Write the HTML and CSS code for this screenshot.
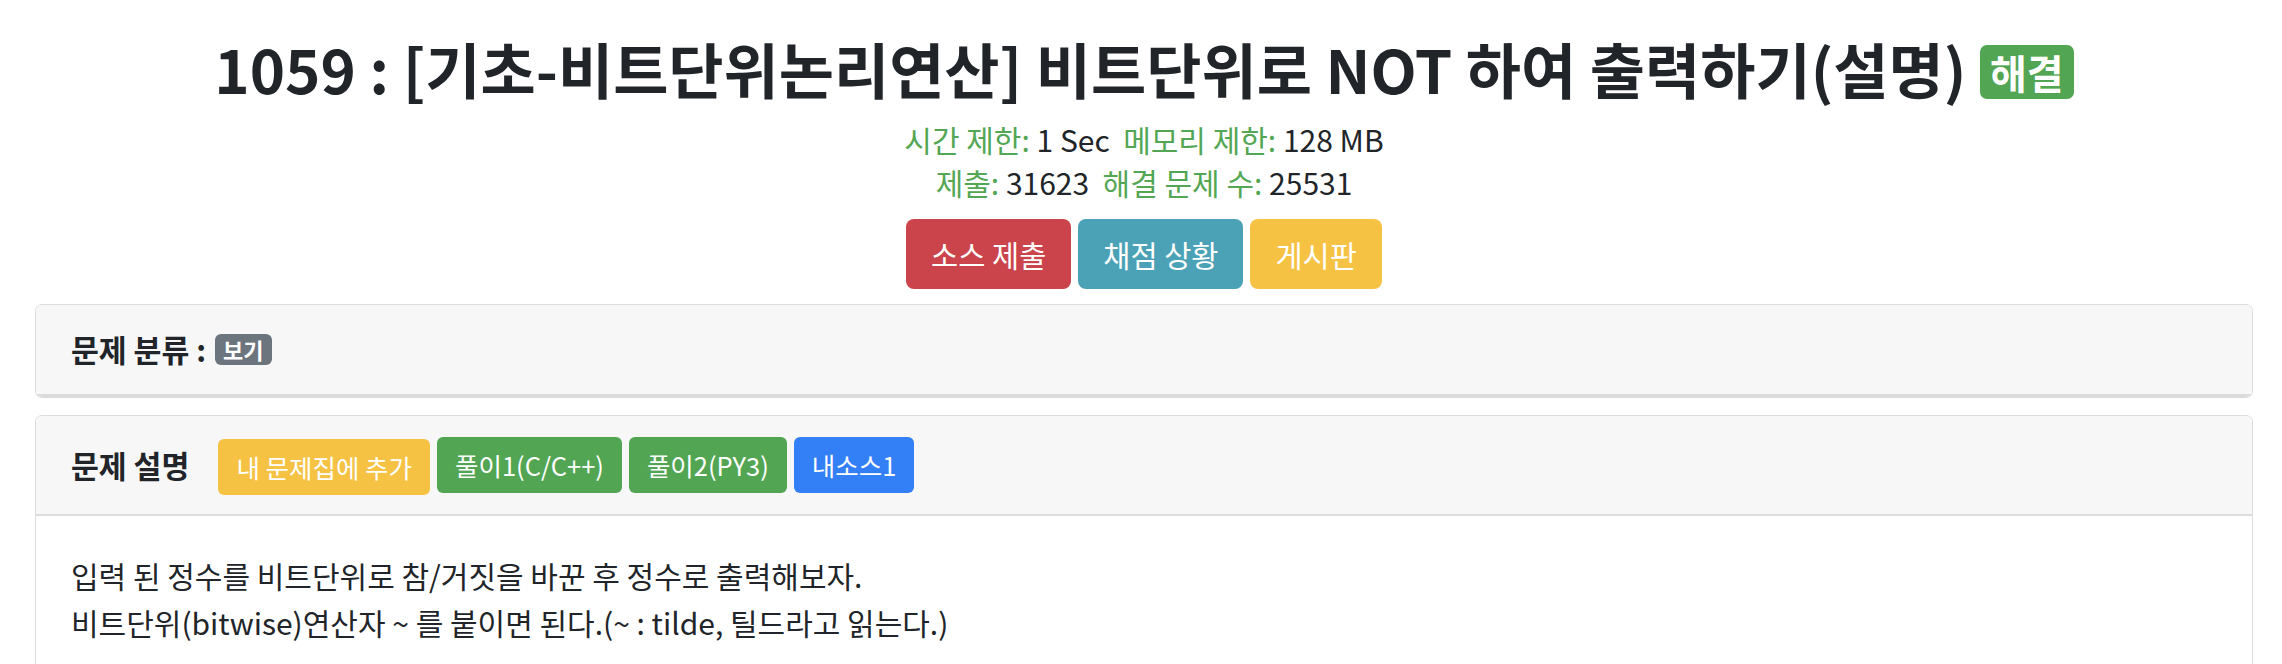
FILE: index.html
```html
<!DOCTYPE html>
<html lang="en">
<head>
<meta charset="utf-8">
<title>1059 : [기초-비트단위논리연산] 비트단위로 NOT 하여 출력하기(설명)</title>
<link rel="stylesheet" href="styles.css">
</head>
<body>
<div class="page">
  <div class="problem-head">
    <h1 class="title">1059 : [기초-비트단위논리연산] 비트단위로 NOT 하여 출력하기(설명) <span class="badge badge-success">해결</span></h1>
    <div class="meta">
      <div><span class="label">시간 제한:</span> 1 Sec&nbsp; <span class="label">메모리 제한:</span> 128 MB</div>
      <div><span class="label">제출:</span> 31623&nbsp; <span class="label">해결 문제 수:</span> 25531</div>
    </div>
    <div class="actions">
      <a class="btn btn-lg btn-danger">소스 제출</a>
      <a class="btn btn-lg btn-info">채점 상황</a>
      <a class="btn btn-lg btn-warning">게시판</a>
    </div>
  </div>

  <div class="card card-collapsed">
    <div class="card-header">
      <span class="head-label">문제 분류 :</span>
      <span class="badge badge-secondary">보기</span>
    </div>
  </div>

  <div class="card">
    <div class="card-header">
      <span class="head-label head-gap">문제 설명</span>
      <a class="btn btn-sm btn-warning btn-low">내 문제집에 추가</a>
      <a class="btn btn-sm btn-success">풀이1(C/C++)</a>
      <a class="btn btn-sm btn-success">풀이2(PY3)</a>
      <a class="btn btn-sm btn-primary">내소스1</a>
    </div>
    <div class="card-body">
      <p>입력 된 정수를 비트단위로 참/거짓을 바꾼 후 정수로 출력해보자.<br>비트단위(bitwise)연산자 ~ 를 붙이면 된다.(~ : tilde, 틸드라고 읽는다.)</p>
    </div>
  </div>
</div>
</body>
</html>
```

FILE: styles.css
```css
* { box-sizing: border-box; }

body {
  margin: 0;
  background: #ffffff;
  color: #212529;
  font-family: "Noto Sans CJK KR", "Noto Sans", sans-serif;
}

.page {
  padding: 32px 29px 0 35px;
}

.problem-head {
  text-align: center;
}

.title {
  margin: 0 0 14px;
  font-size: 60px;
  line-height: 72px;
  font-weight: 700;
  color: #212529;
}

.title .badge {
  font-size: 40px;
  line-height: 54px;
  padding: 0 10px;
  border-radius: 7px;
  vertical-align: 5px;
}

.badge {
  display: inline-block;
  color: #ffffff;
  font-weight: 700;
}

.badge-success { background: #52a552; }
.badge-secondary { background: #6c757d; }

.meta {
  font-size: 30px;
  line-height: 43px;
  color: #212529;
}

.meta .label { color: #53a653; }

.actions {
  margin-top: 15px;
  display: flex;
  justify-content: center;
  gap: 7px;
}

.btn {
  display: inline-block;
  color: #ffffff;
  text-decoration: none;
  white-space: nowrap;
}

.btn-lg {
  font-size: 29.5px;
  line-height: 42px;
  padding: 14px 25px;
  border-radius: 8px;
}

.btn-sm {
  font-size: 25.5px;
  line-height: 36px;
  padding: 10px 18px;
  border-radius: 6px;
}

.btn-danger { background: #cb444b; }
.btn-info { background: #4ba1b6; }
.btn-warning { background: #f5c243; }
.btn-success { background: #52a552; }
.btn-primary { background: #337ff6; }

.btn-low { margin-top: 2px; margin-bottom: -2px; }

.card {
  margin-top: 15px;
  border: 1px solid #dcdcdc;
  border-radius: 7px;
  overflow: hidden;
  background: #ffffff;
}

.card + .card { margin-top: 17px; }

.card-header {
  display: flex;
  align-items: center;
  gap: 7px;
  background: #f7f7f7;
  border-bottom: 2px solid #dcdcdc;
  padding: 21px 35px;
}

.card-collapsed .card-header {
  padding: 24px 35px 25px;
  border-bottom-width: 3px;
}

.head-label {
  font-size: 30.3px;
  line-height: 40px;
  font-weight: 700;
  color: #212529;
}

.head-gap { margin-right: 22px; }

.card-collapsed .badge {
  font-size: 22px;
  line-height: 31px;
  padding: 0 8px;
  border-radius: 6px;
  margin-left: 2px;
}

.card-body {
  padding: 36px 35px 40px;
}

.card-body p {
  margin: 0;
  font-size: 30px;
  line-height: 47px;
}
```
